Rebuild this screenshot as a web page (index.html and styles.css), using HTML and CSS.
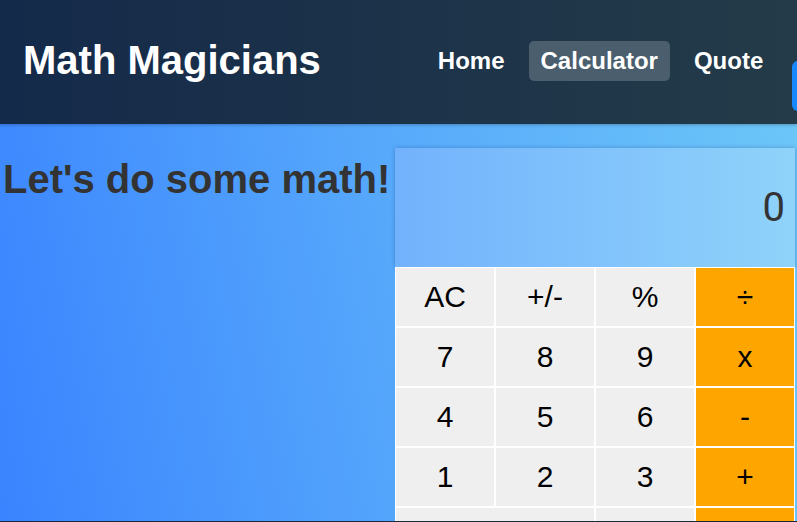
FILE: index.html
```html
<!DOCTYPE html>
<html lang="en">
<head>
<meta charset="utf-8">
<title>Math Magicians</title>
<link rel="stylesheet" href="styles.css">
</head>
<body>
<header class="topbar">
  <h1 class="brand">Math Magicians</h1>
  <nav class="nav">
    <a class="nav-link" href="#">Home</a>
    <a class="nav-link active" href="#">Calculator</a>
    <a class="nav-link" href="#">Quote</a>
    <span class="nav-toggle"></span>
  </nav>
</header>
<main class="page">
  <section class="intro">
    <h2 class="intro-title">Let's do some math!</h2>
  </section>
  <div class="calc">
    <div class="display">0</div>
    <div class="keys">
      <button class="key">AC</button>
      <button class="key">+/-</button>
      <button class="key">%</button>
      <button class="key op">÷</button>
      <button class="key">7</button>
      <button class="key">8</button>
      <button class="key">9</button>
      <button class="key op">x</button>
      <button class="key">4</button>
      <button class="key">5</button>
      <button class="key">6</button>
      <button class="key op">-</button>
      <button class="key">1</button>
      <button class="key">2</button>
      <button class="key">3</button>
      <button class="key op">+</button>
      <button class="key wide">0</button>
      <button class="key">.</button>
      <button class="key op">=</button>
    </div>
  </div>
</main>
<footer class="foot"></footer>
</body>
</html>
```

FILE: styles.css
```css
* { box-sizing: border-box; }

html, body {
  margin: 0;
  padding: 0;
}

body {
  background: #1b2838;
  font-family: "Liberation Sans", Arial, sans-serif;
  overflow: hidden;
  height: 522px;
}

.topbar {
  height: 124px;
  display: flex;
  align-items: center;
  gap: 105px;
  padding: 0 0 3px 23px;
  background: linear-gradient(to right, #142a4a, #243b49);
  overflow: hidden;
  position: relative;
  z-index: 1;
  box-shadow: 0 1px 3px rgba(0, 0, 0, 0.25);
}

.brand {
  margin: 0;
  color: #fff;
  font-size: 40px;
  font-weight: bold;
  white-space: nowrap;
}

.nav {
  display: flex;
  align-items: center;
  gap: 12px;
  align-self: stretch;
}

.nav-link {
  color: #fff;
  text-decoration: none;
  font-size: 24px;
  font-weight: bold;
  padding: 6px 12px;
  border-radius: 5px;
  white-space: nowrap;
}

.nav-link.active {
  background: #4a5e6d;
}

.nav-toggle {
  flex: none;
  width: 50px;
  height: 50px;
  margin-left: 5px;
  align-self: flex-end;
  margin-bottom: 10px;
  border-radius: 6px;
  background: #1789ff;
}

.page {
  height: 397px;
  overflow: hidden;
  display: flex;
  align-items: flex-start;
  padding-top: 24px;
  background: linear-gradient(80deg, #3a84ff 0%, #56a8fb 50%, #6cc6f8 100%);
}

.intro {
  width: 395px;
  flex: none;
  padding-left: 3px;
}

.intro-title {
  margin: 9px 0 0;
  font-size: 40px;
  font-weight: bold;
  color: #333;
  white-space: nowrap;
}

.calc {
  width: 400px;
  flex: none;
  background: #fff;
}

.display {
  height: 119px;
  display: flex;
  align-items: center;
  justify-content: flex-end;
  padding-right: 10px;
  font-family: Roboto, "Liberation Sans", sans-serif;
  font-size: 40px;
  color: #333;
  background: linear-gradient(to right, #72b2fd, #8fd3fa);
  box-shadow: 0 0 4px rgba(0, 40, 100, 0.3);
}

.keys {
  display: grid;
  grid-template-columns: repeat(4, 100px);
  grid-auto-rows: 60px;
}

.key {
  margin: 0;
  border: 1px solid #fff;
  background: #efefef;
  color: #000;
  font-family: "Liberation Sans", Arial, sans-serif;
  font-size: 30px;
  padding: 0;
}

.key.op {
  background: #ffa500;
}

.key.wide {
  grid-column: span 2;
}

.foot {
  height: 1px;
  background: #1b2838;
}
```
